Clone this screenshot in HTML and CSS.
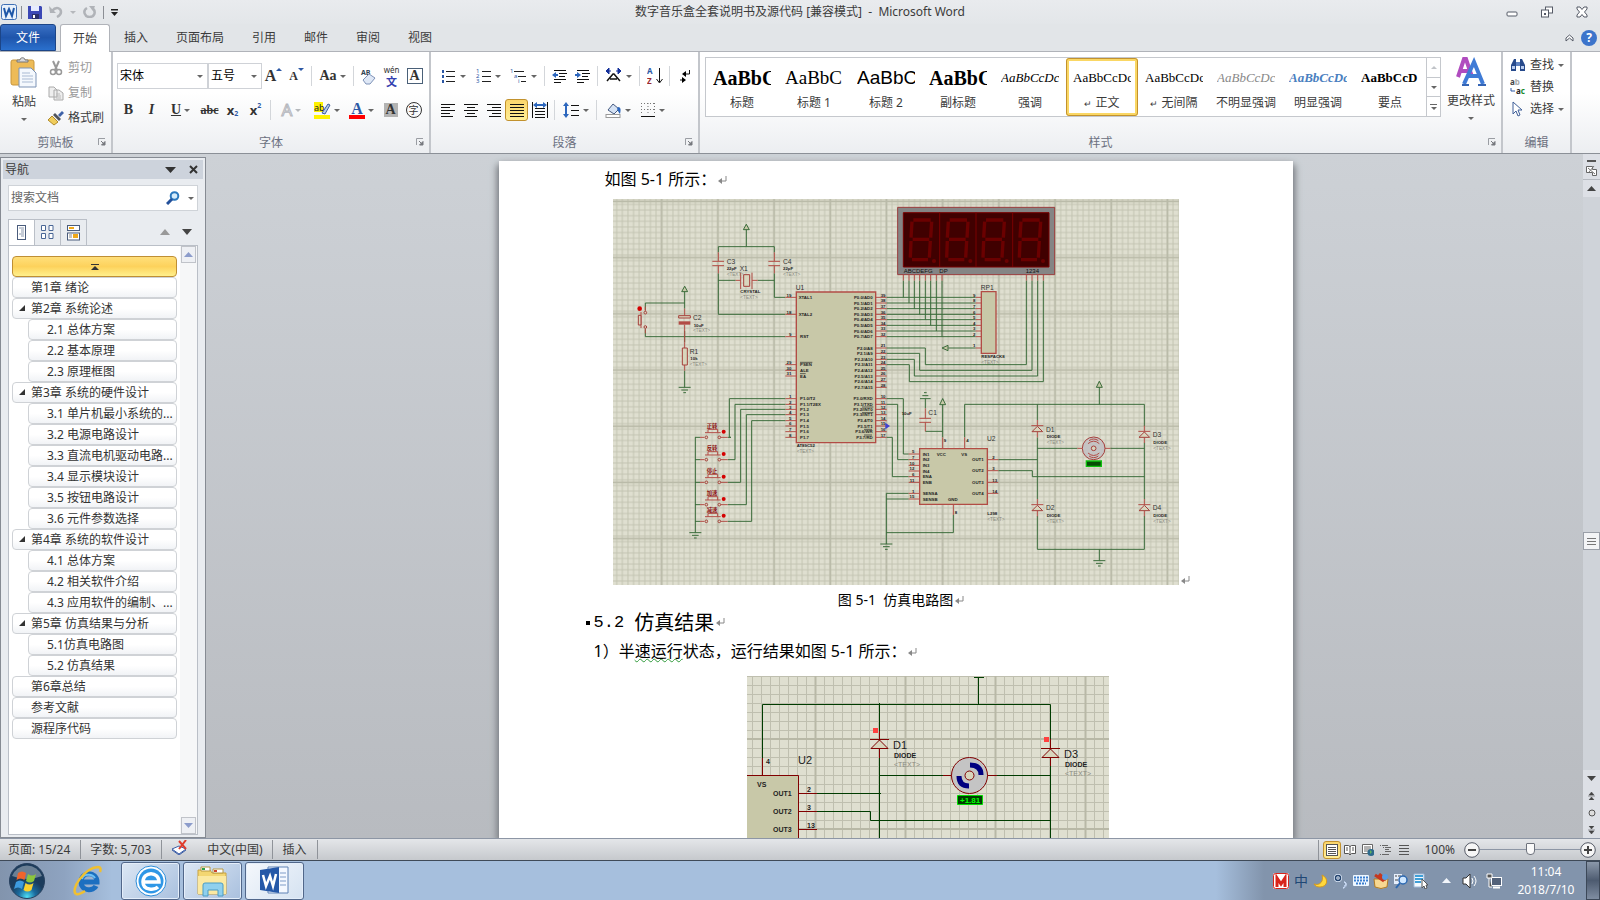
FILE: index.html
```html
<!DOCTYPE html>
<html lang="zh-CN">
<head>
    <meta charset="UTF-8">
    <meta name="viewport" content="width=device-width, initial-scale=1.0">
    <title>数字音乐盒全套说明书及源代码 - Microsoft Word</title>
    <link rel="stylesheet" href="styles.css">
</head>
<body>

    <!-- shared shapes -->
    <svg class="defs" width="0" height="0" aria-hidden="true">
        <defs>
            <symbol id="mark" viewBox="0 0 9 9"><path d="M8 0v5H2" fill="none" stroke="#888"/><path d="M0 5l4-3v6z" fill="#888"/></symbol>
            <symbol id="launcher" viewBox="0 0 8 8"><path d="M.5 7V.5H7" fill="none" stroke="#9a9da3"/><path d="M3 3l3 3M7 3.500V7H3.500z" stroke="#77797e" fill="#77797e"/></symbol>
            <symbol id="diode" viewBox="-20 0 40 20" overflow="visible"><path class="red" d="M0-17V0M0 18V35M-18 0H18"/><path class="part" d="M0 2L-16 18H16z"/></symbol>
            <symbol id="gnd" viewBox="-20 0 40 20" overflow="visible"><path class="wire" d="M-18 0H18M-10 8H10M-4 16H4"/></symbol>
            <symbol id="digit" viewBox="0 0 75 132" overflow="visible"><path d="M12 5H64M8 10L5 58M67 10L64 58M10 63H60M5 68L3 118M63 68L60 118M8 124H56" stroke="#6b0000" stroke-width="10"/><circle cx="74" cy="128" r="6" fill="#6b0000"/></symbol>
            <symbol id="key" viewBox="0 0 90 40" overflow="visible"><path class="wire" d="M-3 0H12M95 0H105"/><path class="red" d="M12 0H25M74 0H95M27-14H74M36-14V-24H65V-14"/><circle class="part" cx="31" cy="0" r="4"/><circle class="part" cx="70" cy="0" r="4"/><circle cx="83" cy="-17" r="6" fill="#d40000"/></symbol>
        </defs>
    </svg>

    <div class="window">

        <header class="titlebar">
            <div class="quick">
                <svg width="16" height="16"><rect x=".5" y=".5" width="15" height="15" rx="2" fill="#e9f1fb" stroke="#3f6fb5"/><path d="M3 4l2 8 3-7 3 7 2-8" fill="none" stroke="#1f57a8" stroke-width="2"/></svg>
                <i class="bar"></i>
                <button title="保存"><svg width="14" height="14"><path d="M0 1h13l1 1v12H0z" fill="#3b47b5"/><path d="M3 1h8v5H3z" fill="#e6ebff"/><path d="M4 9h7v5H4z" fill="#2a2f6b"/><path d="M5 10h2v3H5z" fill="#fff"/></svg></button>
                <button title="撤消"><svg width="14" height="12"><path d="M0 0l1 7h6z" fill="#b0b3b8"/><path d="M3 5c4-5 9-3 9 1 0 3-2 4-4 5" fill="none" stroke="#b0b3b8" stroke-width="2.500"/></svg></button>
                <span class="caret pale"></span>
                <button title="恢复"><svg width="13" height="12"><path d="M4 2C-1 5 2 11 6.500 11c5 0 7-5 3-9" fill="none" stroke="#b0b3b8" stroke-width="2.500"/><path d="M6 0h6l-2 5z" fill="#b0b3b8"/></svg></button>
                <i class="bar"></i>
                <button title="自定义"><svg width="7" height="7"><path d="M0 0h7v1.500H0zM0 3h7L3.500 7z" fill="#222"/></svg></button>
            </div>
            <h1>数字音乐盒全套说明书及源代码 [兼容模式] &nbsp;- &nbsp;Microsoft Word</h1>
            <div class="winbtns">
                <button title="最小化"><svg width="12" height="12"><rect x="1" y="6" width="10" height="4" rx="1" fill="#fff" stroke="#555a66"/></svg></button>
                <button title="还原"><svg width="12" height="12"><rect x="4.500" y="1" width="7" height="6" fill="#fff" stroke="#555a66"/><rect x=".5" y="4" width="7" height="7" fill="#fff" stroke="#555a66"/><path d="M3 7h2v2H3z" fill="#555a66"/></svg></button>
                <button title="关闭"><svg width="12" height="12"><path d="M1 1h3l2 2.500L8 1h3v2L8.500 6 11 9v2H8L6 8.500 4 11H1V9l2.500-3L1 3z" fill="#fff" stroke="#555a66"/></svg></button>
            </div>
        </header>

        <nav class="tabs">
            <button class="file">文件</button>
            <button class="active">开始</button>
            <button>插入</button>
            <button class="wide">页面布局</button>
            <button>引用</button>
            <button>邮件</button>
            <button>审阅</button>
            <button>视图</button>
            <span class="grow"></span>
            <button class="mini" title="功能区最小化"><svg width="9" height="8"><path d="M1 7V4l3.500-3L8 4v3L4.500 4z" fill="#fff" stroke="#555a66"/></svg></button>
            <button class="help" title="帮助">?</button>
        </nav>

        <section class="ribbon">
            <div class="group clipboard">
                <div class="body">
                    <button class="big">
                        <svg width="28" height="31"><rect x="1" y="3" width="23" height="25" rx="2" fill="#edbb58" stroke="#c8963c"/><path d="M7 5V3h3c0-3 5-3 5 0h3v2z" fill="#d9dade" stroke="#777"/><path d="M9 11h12l5 5v14H9z" fill="#f4f8fd" stroke="#7c93b5"/><path d="M12 16h8M12 19h11M12 22h11M12 25h11" stroke="#a9bad3"/></svg>
                        <span>粘贴</span><i class="caret"></i>
                    </button>
                    <div class="stack">
                        <button class="off"><svg width="16" height="16"><path d="M5 1l4 9M11 1L7 10" stroke="#999" stroke-width="2"/><circle cx="5" cy="12" r="2.500" fill="none" stroke="#999" stroke-width="1.500"/><circle cx="11" cy="12" r="2.500" fill="none" stroke="#999" stroke-width="1.500"/></svg>剪切</button>
                        <button class="off"><svg width="16" height="16"><path d="M1 2h5l3 3v7H1zM6 5h5l4 3v7H6z" fill="#eee" stroke="#aaa"/><path d="M8 9h4M8 11h5M8 13h5" stroke="#bbb"/></svg>复制</button>
                        <button><svg width="16" height="16"><path d="M10 5l4-4 2 2-4 4z" fill="#3f62a8"/><path d="M7 3l6 6-2 2-6-6z" fill="#50545c"/><path d="M4 6l6 6-4 3-6-5z" fill="#f0cd5c" stroke="#b08a2a"/></svg>格式刷</button>
                    </div>
                </div>
                <footer>剪贴板<svg width="8" height="8"><use href="#launcher"/></svg></footer>
            </div>

            <div class="group font">
                <div class="body rows">
                    <div class="row">
                        <label class="combo face"><select aria-label="字体"><option>宋体</option></select><i class="caret"></i></label>
                        <label class="combo size"><select aria-label="字号"><option>五号</option></select><i class="caret"></i></label>
                        <button class="tool serif grown">A<sup class="up"></sup></button>
                        <button class="tool serif shrunk">A<sup class="down"></sup></button>
                        <i class="sep"></i>
                        <button class="tool split serif">Aa<i class="caret"></i></button>
                        <i class="sep"></i>
                        <button class="tool" title="清除格式"><svg width="17" height="17"><text x="1" y="7" font-size="7" font-weight="bold" fill="#345">AB</text><path d="M3 12l6-6 6 4-5 6H6z" fill="#dfe8f6" stroke="#7f93b8"/></svg></button>
                        <button class="tool pinyin"><small>wén</small><b>文</b></button>
                        <button class="tool serif boxed"><span>A</span></button>
                    </div>
                    <div class="row">
                        <button class="tool serif">B</button>
                        <button class="tool serif ital">I</button>
                        <button class="tool split serif"><u>U</u><i class="caret"></i></button>
                        <button class="tool serif strike">abc</button>
                        <button class="tool sub">x<sub>2</sub></button>
                        <button class="tool sub">x<sup>2</sup></button>
                        <i class="sep"></i>
                        <button class="tool split outlined">A<i class="caret pale"></i></button>
                        <button class="tool split" title="突出显示"><svg width="17" height="17"><path d="M0 0h9v10H0zM0 13h16v4H0z" fill="#fff200"/><text x="0" y="9" font-size="9" fill="#222">ab</text><path d="M8 11l6-9 2 1-5 9z" fill="#b6cbea" stroke="#3c5ea0"/></svg><i class="caret"></i></button>
                        <button class="tool split serif tint"><span>A</span><i class="caret"></i></button>
                        <button class="tool serif shade"><span>A</span></button>
                        <button class="tool ring"><span>字</span></button>
                    </div>
                </div>
                <footer>字体<svg width="8" height="8"><use href="#launcher"/></svg></footer>
            </div>

            <div class="group para">
                <div class="body rows">
                    <div class="row">
                        <button class="tool split" title="项目符号"><svg width="16" height="16"><path d="M5 3.500h9M5 8.500h9M5 13.500h9" stroke="#222"/><path d="M1 2h2v3H1zM1 7h2v3H1zM1 12h2v3H1z" fill="#2c58a5"/></svg><i class="caret"></i></button>
                        <button class="tool split" title="编号"><svg width="16" height="16"><path d="M6 3.500h9M6 8.500h9M6 13.500h9" stroke="#222"/><text font-size="6" fill="#2c58a5"><tspan x="0" y="5">1</tspan><tspan x="0" y="10">2</tspan><tspan x="0" y="15">3</tspan></text></svg><i class="caret"></i></button>
                        <button class="tool split" title="多级列表"><svg width="18" height="16"><path d="M4 3.500h10M8 8.500h8M11 13.500h5" stroke="#222"/><text font-size="6" fill="#2c58a5"><tspan x="0" y="5">1</tspan><tspan x="4" y="10">a</tspan><tspan x="8" y="15">i</tspan></text></svg><i class="caret"></i></button>
                        <i class="sep"></i>
                        <button class="tool" title="减少缩进"><svg width="17" height="16"><path d="M3 2.500h12M8 5.500h8M8 8.500h6M3 11.500h12M3 14.500h7" stroke="#111"/><path d="M1 7l4-3v2h2v2H5v2z" fill="#2c66bd"/></svg></button>
                        <button class="tool" title="增加缩进"><svg width="17" height="16"><path d="M3 2.500h12M8 5.500h8M8 8.500h6M3 11.500h12M3 14.500h7" stroke="#111"/><path d="M7 7L3 4v2H1v2h2v2z" fill="#2c66bd"/></svg></button>
                        <i class="sep"></i>
                        <button class="tool split" title="中文版式"><svg width="18" height="16"><path d="M2 13l6-7h1l6 7M5 11h7" fill="none" stroke="#111" stroke-width="1.500"/><path d="M1 3l3-3v6zM16 3l-3-3v6zM4 3h2M11 3h2" fill="#14309a" stroke="#14309a"/></svg><i class="caret"></i></button>
                        <i class="sep"></i>
                        <button class="tool" title="排序"><svg width="16" height="18"><text x="0" y="7" font-size="8" font-weight="bold" fill="#2c58a5">A</text><text x="0" y="17" font-size="8" font-weight="bold" fill="#9a2830">Z</text><path d="M12.500 1v14M9.500 12l3 4 3-4" fill="none" stroke="#111"/></svg></button>
                        <i class="sep"></i>
                        <button class="tool" title="显示标记"><svg width="16" height="16"><path d="M12.500 2v4H7M7 12H3" fill="none" stroke="#111"/><path d="M5 6l4-3v6zM9 12l-4-3v6z"/></svg></button>
                    </div>
                    <div class="row">
                        <button class="tool" title="左对齐"><svg width="16" height="14"><path d="M1 1.500h14M1 4.500h9M1 7.500h14M1 10.500h9M1 13.500h12" stroke="#111"/></svg></button>
                        <button class="tool" title="居中"><svg width="16" height="14"><path d="M1 1.500h14M4 4.500h8M1 7.500h14M4 10.500h8M2 13.500h12" stroke="#111"/></svg></button>
                        <button class="tool" title="右对齐"><svg width="16" height="14"><path d="M1 1.500h14M6 4.500h9M1 7.500h14M6 10.500h9M3 13.500h12" stroke="#111"/></svg></button>
                        <button class="tool gold" title="两端对齐"><svg width="16" height="14"><path d="M1 1.500h14M1 4.500h14M1 7.500h14M1 10.500h14M1 13.500h14" stroke="#111"/></svg></button>
                        <button class="tool" title="分散对齐"><svg width="16" height="16"><path d="M3 6.500h10M3 9.500h10M3 12.500h10M3 15.500h10M.5 0v16M15.500 0v16" stroke="#111"/><path d="M1 3l4-3v2h6V0l4 3-4 3V4H5v2z" fill="#2c66bd"/></svg></button>
                        <i class="sep"></i>
                        <button class="tool split" title="行距"><svg width="17" height="16"><path d="M8 3.500h8M8 8.500h8M8 13.500h8" stroke="#111"/><path d="M3 0l3 4H4v8h2l-3 4-3-4h2V4H0z" fill="#2c66bd"/></svg><i class="caret"></i></button>
                        <i class="sep"></i>
                        <button class="tool split" title="底纹"><svg width="17" height="16"><path d="M3 8l5-6 6 5-5 5z" fill="#d5e2f4" stroke="#455a80"/><path d="M13 5c3 0 3 3 2 7-2-2-2-4-3-5z" fill="#2c66bd"/><rect x="1" y="12.500" width="14" height="3" fill="#fff" stroke="#999"/></svg><i class="caret"></i></button>
                        <button class="tool split" title="边框"><svg width="16" height="16"><path d="M1.500 1v12M14.500 1v12M8 1v12M1 1.500h14M1 7.500h14" stroke="#777" stroke-dasharray="1 2"/><path d="M1 14.500h14" stroke="#111"/></svg><i class="caret"></i></button>
                    </div>
                </div>
                <footer>段落<svg width="8" height="8"><use href="#launcher"/></svg></footer>
            </div>

            <div class="group styles">
                <div class="body">
                    <div class="gallery">
                        <button><b class="s1">AaBbC</b><span>标题</span></button>
                        <button><b class="s2">AaBbC</b><span>标题 1</span></button>
                        <button><b class="s3">AaBbC</b><span>标题 2</span></button>
                        <button><b class="s1">AaBbC</b><span>副标题</span></button>
                        <button><b class="s4">AaBbCcDc</b><span>强调</span></button>
                        <button class="picked"><b class="s5">AaBbCcDc</b><span><small>↵</small> 正文</span></button>
                        <button><b class="s5">AaBbCcDc</b><span><small>↵</small> 无间隔</span></button>
                        <button><b class="s4 gray">AaBbCcDc</b><span>不明显强调</span></button>
                        <button><b class="s4 blue">AaBbCcDc</b><span>明显强调</span></button>
                        <button><b class="s6">AaBbCcD</b><span>要点</span></button>
                        <div class="updown">
                            <button title="上一行"><i class="tri"></i></button>
                            <button title="下一行"><i class="caret"></i></button>
                            <button title="其他"><i class="line"></i><i class="caret"></i></button>
                        </div>
                    </div>
                    <button class="big change">
                        <svg width="30" height="30"><path d="M2 20L8 2h2l6 18M5 14h8" fill="none" stroke="#b04cbf" stroke-width="4"/><path d="M8 27L18 5l9 22M12 19h11" fill="none" stroke="#3f7bd6" stroke-width="4"/><path d="M6 28h7M22 28h8" stroke="#3565b5" stroke-width="2"/></svg>
                        <span>更改样式</span><i class="caret"></i>
                    </button>
                </div>
                <footer>样式<svg width="8" height="8"><use href="#launcher"/></svg></footer>
            </div>

            <div class="group edit">
                <div class="body">
                    <div class="stack">
                        <button><svg width="16" height="16"><path d="M1 14V8l3-6h2v12zM15 14V8l-3-6h-2v12z" fill="#274a8c"/><path d="M6 5h4v4H6z" fill="#5f82c0"/><path d="M2 9h3v3H2zM11 9h3v3h-3z" fill="#b9cdf0"/></svg>查找<i class="caret"></i></button>
                        <button><svg width="16" height="16"><text x="0" y="6" font-size="8" font-weight="bold" fill="#444">a<tspan fill="#aaa">b</tspan></text><text x="6" y="15" font-size="8" font-weight="bold" fill="#222">a<tspan fill="#178a2c">c</tspan></text><path d="M1 9v3h4" fill="none" stroke="#2c58a5"/></svg>替换</button>
                        <button><svg width="16" height="16"><path d="M3 1v12l3-3 2 5 2-1-2-5h4z" fill="#fff" stroke="#3f5f98"/></svg>选择<i class="caret"></i></button>
                    </div>
                </div>
                <footer>编辑</footer>
            </div>
        </section>

        <main class="work">
            <aside class="navpane">
                <div class="navhead"><span>导航</span><button title="选项"><svg width="11" height="6"><path d="M0 0h11L5.500 6z" fill="#333"/></svg></button><button title="关闭"><svg width="9" height="9"><path d="M1 1l7 7M8 1L1 8" stroke="#333" stroke-width="2"/></svg></button></div>
                <div class="search">
                    <input type="text" placeholder="搜索文档" aria-label="搜索文档">
                    <svg width="14" height="14"><circle cx="8.500" cy="5" r="3.800" fill="#d5ecfb" stroke="#2a78bd" stroke-width="2"/><path d="M6 8l-5 5" stroke="#24509a" stroke-width="3"/></svg>
                    <i class="caret"></i>
                </div>
                <div class="navtabs">
                    <button class="on" title="标题"><svg width="10" height="16"><rect x=".5" y=".5" width="8" height="14" fill="#fff" stroke="#4a5c7c"/><path d="M2 3h5M4 5h3M4 7h3M2 9h5M4 11h3" stroke="#8b98ad"/></svg></button>
                    <button title="页面"><svg width="13" height="15"><path d="M.5.5h4v5h-4zM8 .5h4v5H8zM.5 8.500h4v5h-4zM8 8.500h4v5H8z" fill="#fff" stroke="#4a6796"/></svg></button>
                    <button title="结果"><svg width="14" height="16"><rect x=".5" y=".5" width="12" height="5" fill="#fff" stroke="#4a5c7c"/><rect x=".5" y="8" width="12" height="7" fill="#fff" stroke="#4a5c7c"/><path d="M2 2h5v2H2zM6 9h5v4H6z" fill="#f0a818"/><path d="M2 10h3M2 12h3" stroke="#888"/></svg></button>
                    <span class="grow"></span>
                    <svg width="10" height="6"><path d="M0 6h10L5 0z" fill="#999"/></svg>
                    <svg width="10" height="6"><path d="M0 0h10L5 6z" fill="#444"/></svg>
                </div>
                <div class="outline">
                    <ul>
                        <li><button class="totop" title="跳转到开头"><svg width="8" height="7"><path d="M0 .5h8" stroke="#333"/><path d="M0 6h8L4 2z" fill="#333"/></svg></button></li>
                        <li><a href="#">第1章 绪论</a></li>
                        <li class="open"><a href="#">第2章 系统论述</a></li>
                        <li class="sub2"><a href="#">2.1 总体方案</a></li>
                        <li class="sub2"><a href="#">2.2 基本原理</a></li>
                        <li class="sub2"><a href="#">2.3 原理框图</a></li>
                        <li class="open"><a href="#">第3章 系统的硬件设计</a></li>
                        <li class="sub2"><a href="#">3.1 单片机最小系统的...</a></li>
                        <li class="sub2"><a href="#">3.2 电源电路设计</a></li>
                        <li class="sub2"><a href="#">3.3 直流电机驱动电路...</a></li>
                        <li class="sub2"><a href="#">3.4 显示模块设计</a></li>
                        <li class="sub2"><a href="#">3.5 按钮电路设计</a></li>
                        <li class="sub2"><a href="#">3.6 元件参数选择</a></li>
                        <li class="open"><a href="#">第4章 系统的软件设计</a></li>
                        <li class="sub2"><a href="#">4.1 总体方案</a></li>
                        <li class="sub2"><a href="#">4.2 相关软件介绍</a></li>
                        <li class="sub2"><a href="#">4.3 应用软件的编制、...</a></li>
                        <li class="open"><a href="#">第5章 仿真结果与分析</a></li>
                        <li class="sub2"><a href="#">5.1仿真电路图</a></li>
                        <li class="sub2"><a href="#">5.2 仿真结果</a></li>
                        <li><a href="#">第6章总结</a></li>
                        <li><a href="#">参考文献</a></li>
                        <li><a href="#">源程序代码</a></li>
                    </ul>
                    <div class="navscroll">
                        <button title="向上"><svg width="9" height="5"><path d="M0 5h9L4.500 0z" fill="#8c9ccb"/></svg></button>
                        <button title="向下"><svg width="9" height="5"><path d="M0 0h9L4.500 5z" fill="#8c9ccb"/></svg></button>
                    </div>
                </div>
            </aside>

            <div class="canvas">
                <article class="page">
                    <p class="lead">如图 5-1 所示：<svg class="mark" width="9" height="9"><use href="#mark"/></svg></p>

                    <figure>
                        <svg class="circuit" width="566" height="386" viewBox="39 27 1698 1158">
                            <defs>
                                <pattern id="fine" x="8" y="18" width="16.860" height="16.860" patternUnits="userSpaceOnUse"><path d="M0 8.400H17M8.400 0V17" stroke="#c3c4b2" stroke-width="3"/></pattern>
                                <pattern id="coarse" x="101" y="119" width="168.600" height="168.600" patternUnits="userSpaceOnUse"><path d="M0 84H169M84 0V169" stroke="#b9baa8" stroke-width="5"/></pattern>
                            </defs>
                            <rect x="39" y="27" width="1698" height="1158" fill="#dfdfd0"/>
                            <rect x="39" y="27" width="1698" height="1158" fill="url(#fine)"/>
                            <rect x="39" y="27" width="1698" height="1158" fill="url(#coarse)"/>

                            <!-- crystal and reset -->
                            <path class="wire" d="M439 103V170M355 187V170H523V187M355 250V373H556M523 250V322H556M355 271H407M473 271H523M136 360V339H254M254 289V356M254 423V457M254 542V592M136 418V440H556"/>
                            <g class="arrow"><path d="M439 103l-9 16h18zM254 289l-9 16h18z"/></g>
                            <path class="red" d="M355 187V213M337 214H372M337 227H372M355 227V250M523 187V213M505 214H540M505 227H540M523 227V250M407 271H422M422 248V297M456 248V297M456 271H473M254 356V377M254 404V457M254 457V474M254 525V542M136 350V364M136 415V430M123 366V414"/>
                            <path class="part" d="M431 254H449V289H431zM236 377H271V384H236zM247 474H262V525H247zM115 376H123V405H115z"/>
                            <path d="M236 394H271V404H236z" fill="#b24c45"/>
                            <circle class="part" cx="136" cy="368" r="4"/><circle class="part" cx="136" cy="411" r="4"/><circle cx="119" cy="356" r="7" fill="#d40000"/>
                            <use href="#gnd" x="234" y="592" width="40" height="20"/>

                            <!-- display -->
                            <path d="M893 52H1364V254H893z" fill="#858585" stroke="#9c3c3c" stroke-width="3"/>
                            <path d="M910 68H1347V231H910zM1019 68V231M1128 68V231M1238 68V231" fill="#400000" stroke="#7a0000" stroke-width="3"/>
                            <use href="#digit" x="928" y="85" width="75" height="132"/><use href="#digit" x="1037" y="85" width="75" height="132"/><use href="#digit" x="1146" y="85" width="75" height="132"/><use href="#digit" x="1255" y="85" width="75" height="132"/>
                            <path class="red" d="M910 254V272M927 254V272M943 254V272M959 254V272M976 254V272M992 254V272M1009 254V272M1026 254V272M1279 254V272M1296 254V272M1313 254V272M1330 254V272"/>
                            <path class="wire" d="M910 272V322M927 272V339M943 272V356M959 272V373M976 272V389M992 272V406M1009 272V423M1026 272V440M860 322H1127M860 339H1127M860 356H1127M860 373H1127M860 389H1127M860 406H1127M860 423H1127M860 440H1127M1045 474H1127"/>
                            <path class="wire" d="M860 474H976V524H1279V272M860 490H959V541H1296V272M860 508H943V558H1313V272M860 524H928V575H1330V272"/>
                            <path class="arrow" d="M1026 474l18-8v16z"/>
                            <path class="red" d="M1127 322H1144M1127 339H1144M1127 356H1144M1127 373H1144M1127 389H1144M1127 406H1144M1127 423H1144M1127 440H1144M1127 474H1144"/>
                            <path class="chip" d="M1144 305H1188V490H1144z"/>

                            <!-- mcu -->
                            <path class="chip" d="M589 306H827V758H589z"/>
                            <path class="red" d="M556 322H589M556 373H589M556 440H589M556 524H589M556 541H589M556 558H589M556 626H589M556 643H589M556 658H589M556 674H589M556 692H589M556 708H589M556 725H589M556 742H589"/>
                            <path class="red" d="M827 322H860M827 339H860M827 356H860M827 373H860M827 389H860M827 406H860M827 423H860M827 440H860M827 474H860M827 490H860M827 508H860M827 524H860M827 541H860M827 558H860M827 575H860M827 592H860M827 626H860M827 643H860M827 658H860M827 674H860M827 692H860M827 708H860M827 725H860M827 742H860"/>
                            <path d="M600 517H637M600 551H617M786 651H820M786 668H820M792 718H816M792 735H816" stroke="#222" stroke-width="2"/>
                            <path d="M856 698l14 10-14 10z" fill="#4040d0"/>

                            <!-- keys -->
                            <path class="wire" d="M286 742V1028M393 742H388V626H556M393 809H405V643H556M393 877H422V658H556M393 944H439V674H556M393 994H455V692H556"/>
                            <use href="#key" x="288" y="742" width="90" height="40"/><use href="#key" x="288" y="809" width="90" height="40"/><use href="#key" x="288" y="877" width="90" height="40"/><use href="#key" x="288" y="944" width="90" height="40"/><use href="#key" x="288" y="994" width="90" height="40"/>
                            <use href="#gnd" x="266" y="1028" width="40" height="20"/>

                            <!-- driver and bridge -->
                            <path class="wire" d="M860 626H910V792H926M860 643H893V809H926M860 742H877V860H926M926 910H859V1062M926 927H859M1060 975V1028H859M960 626H992M967 617H985M972 608H980M976 626V655M976 724H1028M1028 626V742M1094 742V643H1633M1498 574V643M1195 809H1312M1195 842H1297V860H1633M1312 643V690M1312 742V927M1312 978V1078H1633V978M1633 643V708M1633 758V927M1312 775H1432M1531 775H1633M1498 1078V1112"/>
                            <g class="arrow"><path d="M1028 626l-9 18h18zM1498 574l-9 18h18z"/></g>
                            <path class="red" d="M976 655V685M958 685H993M958 697H993M976 697V724M1028 742V776M1094 742V776M1060 943V975M926 792H959M926 809H959M926 826H959M926 843H959M926 860H959M926 877H959M926 910H959M926 927H959M1162 809H1195M1162 842H1195M1162 877H1195M1162 910H1195M1432 775H1447M1515 775H1531"/>
                            <path class="chip" d="M959 776H1162V943H959z"/>
                            <use href="#diode" x="1292" y="707" width="40" height="20"/><use href="#diode" x="1292" y="944" width="40" height="20"/><use href="#diode" x="1613" y="724" width="40" height="20"/><use href="#diode" x="1613" y="944" width="40" height="20"/>
                            <use href="#gnd" x="839" y="1062" width="40" height="20"/><use href="#gnd" x="1478" y="1112" width="40" height="20"/>
                            <circle cx="1481" cy="775" r="34" fill="#c5c3c3" stroke="#a5403c" stroke-width="3"/><circle class="part" cx="1481" cy="775" r="7"/>
                            <path class="red" d="M1464 761q17-15 34 0M1467 752q14-10 28 0M1464 789q17 15 34 0M1467 798q14 10 28 0"/>
                            <path d="M1459 813H1504V829H1459z" fill="#064c06" stroke="#0fc00f" stroke-width="4"/>

                            <g class="name">
                                <text x="380" y="221">C3</text><text x="549" y="221">C4</text><text x="419" y="242">X1</text><text x="279" y="390">C2</text><text x="269" y="491">R1</text><text x="587" y="300">U1</text><text x="1142" y="300">RP1</text><text x="985" y="676">C1</text><text x="1161" y="753">U2</text><text x="1338" y="725">D1</text><text x="1338" y="961">D2</text><text x="1658" y="742">D3</text><text x="1658" y="961">D4</text>
                            </g>
                            <g class="seg"><text x="911" y="248">ABCDEFG</text><text x="1018" y="248">DP</text><text x="1277" y="248">1234</text></g>
                            <g class="tiny">
                                <text x="380" y="241">22pF</text><text x="549" y="241">22pF</text><text x="421" y="310">CRYSTAL</text><text x="281" y="410">10uF</text><text x="271" y="511">10k</text><text x="590" y="772">AT89C52</text><text x="1144" y="504">RESPACK8</text><text x="905" y="676">10uF</text><text x="1162" y="975">L298</text><text x="1340" y="745">DIODE</text><text x="1340" y="981">DIODE</text><text x="1660" y="762">DIODE</text><text x="1660" y="981">DIODE</text>
                                <text><tspan x="596" y="327">XTAL1</tspan><tspan x="596" y="378">XTAL2</tspan><tspan x="600" y="445">RST</tspan><tspan x="600" y="529">PSEN</tspan><tspan x="600" y="546">ALE</tspan><tspan x="600" y="563">EA</tspan><tspan x="600" y="631">P1.0/T2</tspan><tspan x="600" y="648">P1.1/T2EX</tspan><tspan x="600" y="663">P1.2</tspan><tspan x="600" y="679">P1.3</tspan><tspan x="600" y="697">P1.4</tspan><tspan x="600" y="713">P1.5</tspan><tspan x="600" y="730">P1.6</tspan><tspan x="600" y="747">P1.7</tspan></text>
                                <text text-anchor="end"><tspan x="818" y="327">P0.0/AD0</tspan><tspan x="818" y="344">P0.1/AD1</tspan><tspan x="818" y="361">P0.2/AD2</tspan><tspan x="818" y="378">P0.3/AD3</tspan><tspan x="818" y="394">P0.4/AD4</tspan><tspan x="818" y="411">P0.5/AD5</tspan><tspan x="818" y="428">P0.6/AD6</tspan><tspan x="818" y="445">P0.7/AD7</tspan><tspan x="818" y="479">P2.0/A8</tspan><tspan x="818" y="495">P2.1/A9</tspan><tspan x="818" y="513">P2.2/A10</tspan><tspan x="818" y="529">P2.3/A11</tspan><tspan x="818" y="546">P2.4/A12</tspan><tspan x="818" y="563">P2.5/A13</tspan><tspan x="818" y="580">P2.6/A14</tspan><tspan x="818" y="597">P2.7/A15</tspan><tspan x="818" y="631">P3.0/RXD</tspan><tspan x="818" y="648">P3.1/TXD</tspan><tspan x="818" y="663">P3.2/INT0</tspan><tspan x="818" y="679">P3.3/INT1</tspan><tspan x="818" y="697">P3.4/T0</tspan><tspan x="818" y="713">P3.5/T1</tspan><tspan x="818" y="730">P3.6/WR</tspan><tspan x="818" y="747">P3.7/RD</tspan></text>
                                <text text-anchor="end"><tspan x="574" y="320">19</tspan><tspan x="574" y="371">18</tspan><tspan x="574" y="438">9</tspan><tspan x="574" y="522">29</tspan><tspan x="574" y="539">30</tspan><tspan x="574" y="556">31</tspan><tspan x="574" y="624">1</tspan><tspan x="574" y="641">2</tspan><tspan x="574" y="656">3</tspan><tspan x="574" y="672">4</tspan><tspan x="574" y="690">5</tspan><tspan x="574" y="706">6</tspan><tspan x="574" y="723">7</tspan><tspan x="574" y="740">8</tspan></text>
                                <text><tspan x="842" y="320">39</tspan><tspan x="842" y="337">38</tspan><tspan x="842" y="354">37</tspan><tspan x="842" y="371">36</tspan><tspan x="842" y="387">35</tspan><tspan x="842" y="404">34</tspan><tspan x="842" y="421">33</tspan><tspan x="842" y="438">32</tspan><tspan x="842" y="472">21</tspan><tspan x="842" y="488">22</tspan><tspan x="842" y="506">23</tspan><tspan x="842" y="522">24</tspan><tspan x="842" y="539">25</tspan><tspan x="842" y="556">26</tspan><tspan x="842" y="573">27</tspan><tspan x="842" y="590">28</tspan><tspan x="842" y="624">10</tspan><tspan x="842" y="641">11</tspan><tspan x="842" y="656">12</tspan><tspan x="842" y="672">13</tspan><tspan x="842" y="690">14</tspan><tspan x="842" y="706">15</tspan><tspan x="842" y="723">16</tspan><tspan x="842" y="740">17</tspan></text>
                                <text><tspan x="1119" y="320">9</tspan><tspan x="1119" y="337">8</tspan><tspan x="1119" y="354">7</tspan><tspan x="1119" y="371">6</tspan><tspan x="1119" y="387">5</tspan><tspan x="1119" y="404">4</tspan><tspan x="1119" y="421">3</tspan><tspan x="1119" y="438">2</tspan><tspan x="1119" y="472">1</tspan></text>
                                <text text-anchor="end"><tspan x="943" y="790">5</tspan><tspan x="943" y="807">7</tspan><tspan x="943" y="824">10</tspan><tspan x="943" y="841">12</tspan><tspan x="943" y="858">6</tspan><tspan x="943" y="875">11</tspan><tspan x="943" y="908">1</tspan><tspan x="943" y="925">15</tspan></text>
                                <text><tspan x="968" y="797">IN1</tspan><tspan x="968" y="814">IN2</tspan><tspan x="968" y="831">IN3</tspan><tspan x="968" y="848">IN4</tspan><tspan x="968" y="865">ENA</tspan><tspan x="968" y="882">ENB</tspan><tspan x="968" y="915">SENSA</tspan><tspan x="968" y="932">SENSB</tspan><tspan x="1010" y="797">VCC</tspan><tspan x="1084" y="797">VS</tspan><tspan x="1044" y="934">GND</tspan><tspan x="1031" y="756">9</tspan><tspan x="1099" y="756">4</tspan><tspan x="1064" y="973">8</tspan><tspan x="1177" y="807">2</tspan><tspan x="1177" y="840">3</tspan><tspan x="1177" y="875">13</tspan><tspan x="1177" y="908">14</tspan></text>
                                <text text-anchor="end"><tspan x="1151" y="814">OUT1</tspan><tspan x="1151" y="847">OUT2</tspan><tspan x="1151" y="882">OUT3</tspan><tspan x="1151" y="915">OUT4</tspan></text>
                            </g>
                            <g class="keyname"><text x="320" y="714">正转</text><text x="320" y="781">反转</text><text x="320" y="849">停止</text><text x="320" y="916">加速</text><text x="320" y="967">减速</text></g>
                            <g class="ghost">
                                <text x="380" y="258">&lt;TEXT&gt;</text><text x="549" y="258">&lt;TEXT&gt;</text><text x="421" y="327">&lt;TEXT&gt;</text><text x="279" y="426">&lt;TEXT&gt;</text><text x="269" y="527">&lt;TEXT&gt;</text><text x="590" y="789">&lt;TEXT&gt;</text><text x="1144" y="521">&lt;TEXT&gt;</text><text x="1162" y="992">&lt;TEXT&gt;</text><text x="1340" y="762">&lt;TEXT&gt;</text><text x="1340" y="998">&lt;TEXT&gt;</text><text x="1660" y="779">&lt;TEXT&gt;</text><text x="1660" y="998">&lt;TEXT&gt;</text>
                            </g>
                        </svg><svg class="mark" width="9" height="9"><use href="#mark"/></svg>
                        <figcaption>图 5-1&nbsp; 仿真电路图<svg class="mark" width="9" height="9"><use href="#mark"/></svg></figcaption>
                    </figure>

                    <h2><span class="half">5.2 </span>仿真结果<svg class="mark" width="9" height="9"><use href="#mark"/></svg></h2>
                    <p class="state">1）半<span class="wavy">速运行</span>状态，运行结果如图 5-1 所示：<svg class="mark" width="9" height="9"><use href="#mark"/></svg></p>

                    <figure class="second">
                        <svg class="circuit large" width="362" height="200" viewBox="0 0 362 200">
                            <defs>
                                <pattern id="fine2" x="5" y="0" width="9" height="9" patternUnits="userSpaceOnUse"><path d="M0 .5H9M.5 0V9" stroke="#bfbfaf"/></pattern>
                                <pattern id="coarse2" x="23" y="18" width="90" height="90" patternUnits="userSpaceOnUse"><path d="M0 45H90M45.500 0V90" stroke="#b8b8a6" stroke-width="2"/></pattern>
                            </defs>
                            <rect width="362" height="200" fill="#dfdfd0"/><rect width="362" height="200" fill="url(#fine2)"/><rect width="362" height="200" fill="url(#coarse2)"/>
                            <path class="wire" d="M15.500 82V28.500H303.500V63M227 1.500H237M231.500 1V29M132.500 27V55M132.500 82V200M70 117.500H134M70 135.500H123.500V144.500H304M303.500 90V200M132 99.500H196M250 99.500H304"/>
                            <path class="chip" d="M-2 99.500H51.500V210H-2z"/>
                            <path class="red" d="M15.500 82V99M52 117.500H70M52 135.500H70M52 153.500H70M132.500 55V82M123 63.500H142M303.500 63V90M294 72.500H313M196 99.500H205M240 99.500H250"/>
                            <path class="part" d="M132.500 64L124 72.500H141zM303.500 73L295 81.500H312z"/>
                            <path d="M126 52h5v5h-5zM297 61h5v5h-5z" fill="#ff4040"/>
                            <circle cx="222.500" cy="99.500" r="18" fill="#c4c4c4" stroke="#800000"/><circle class="part" cx="222.500" cy="99.500" r="4.500"/>
                            <path d="M223 89q11 0 11 10M222 110q-10 0-10-10" fill="none" stroke="#000080" stroke-width="5"/>
                            <path d="M210.500 119.500H235.500V128.500H210.500z" fill="#003c00" stroke="#00e000"/>
                            <g class="name"><text x="51" y="88">U2</text><text x="146" y="73">D1</text><text x="317" y="82">D3</text></g>
                            <g class="tiny"><text x="147" y="82">DIODE</text><text x="318" y="91">DIODE</text><text x="10" y="111">VS</text><text x="26" y="120">OUT1</text><text x="26" y="138">OUT2</text><text x="26" y="156">OUT3</text><text x="19" y="88">4</text><text x="60" y="116">2</text><text x="60" y="134">3</text><text x="60" y="152">13</text></g>
                            <g class="ghost"><text x="147" y="91">&lt;TEXT&gt;</text><text x="318" y="100">&lt;TEXT&gt;</text></g>
                            <text class="volt" x="213" y="127">+1.81</text>
                        </svg>
                    </figure>
                </article>
            </div>

            <div class="scroll">
                <button class="ruler" title="标尺"><svg width="13" height="16"><path d="M2 1h9" stroke="#555" stroke-width="2"/><path d="M1.500 6.500h6v3h4v6h-4v-3h-6z" fill="#fff" stroke="#666"/><path d="M3 8l7 6M9 6l-5 6" stroke="#777"/></svg></button>
                <button title="向上"><svg width="9" height="5"><path d="M0 5h9L4.500 0z" fill="#444"/></svg></button>
                <div class="track"><button class="thumb" title="滚动"><svg width="9" height="9"><path d="M0 1.500h9M0 4.500h9M0 7.500h9" stroke="#777"/></svg></button></div>
                <button title="向下"><svg width="9" height="5"><path d="M0 0h9L4.500 5z" fill="#444"/></svg></button>
                <button title="前一页"><svg width="7" height="8"><path d="M1 3h5L3.500 0zM0 4h7M1 8h5L3.500 5z" fill="#444" stroke="#444" stroke-width=".5"/></svg></button>
                <button title="选择对象"><svg width="8" height="8"><circle cx="4" cy="4" r="3" fill="#ddd" stroke="#555"/></svg></button>
                <button title="下一页"><svg width="7" height="8"><path d="M1 0h5L3.500 3zM0 4h7M1 5h5L3.500 8z" fill="#444" stroke="#444" stroke-width=".5"/></svg></button>
            </div>
        </main>

        <footer class="status">
            <button>页面: 15/24</button>
            <button>字数: 5,703</button>
            <button class="plain" title="校对"><svg width="17" height="15"><path d="M1 9l7-3 7 3-7 5z" fill="#fff" stroke="#3c5fa8"/><path d="M1 10l7 5 7-5" fill="none" stroke="#3c5fa8"/><path d="M8 1l7 8M15 0L8 9" stroke="#e03c2c" stroke-width="2"/></svg></button>
            <button>中文(中国)</button>
            <button>插入</button>
            <span class="grow"></span>
            <div class="views">
                <button class="gold" title="页面视图"><svg width="12" height="12"><rect x=".5" y=".5" width="11" height="11" fill="#fff" stroke="#555"/><path d="M2 3.500h8M2 5.500h8M2 7.500h8M2 9.500h8" stroke="#555"/></svg></button>
                <button title="阅读版式"><svg width="12" height="12"><path d="M.5 1.500h4l1.500 1 1.500-1h4v8h-4L6 11 4.500 9.500h-4zM6 2v9M2 4h2M2 6h2M8 4h2M8 6h2" fill="#fff" stroke="#555"/></svg></button>
                <button title="Web版式"><svg width="12" height="12"><path d="M.5.5h10v9H.5zM2 3h7M2 5h7M2 7h5" fill="#fff" stroke="#666"/><circle cx="9" cy="8.500" r="3.500" fill="#2d6a8c"/><path d="M8 6l2 2-2 2z" fill="#62b35c"/></svg></button>
                <button title="大纲视图"><svg width="12" height="12"><path d="M2 1.500h6M5 3.500h6M5 5.500h4M5 7.500h6M2 10.500h7M0 1.500h1M3 3.500h1M0 10.500h1" stroke="#666"/></svg></button>
                <button title="草稿"><svg width="12" height="12"><path d="M1 1.500h10M1 4.500h10M1 7.500h10M1 10.500h10" stroke="#555"/></svg></button>
            </div>
            <button class="plain zoom">100%</button>
            <button class="round" title="缩小"><svg width="16" height="16"><circle cx="8" cy="8" r="7.300" fill="#f6f6f6" stroke="#555a66"/><path d="M4 8h8" stroke="#444" stroke-width="2"/></svg></button>
            <input class="slider" type="range" min="0" max="100" value="50" aria-label="显示比例">
            <button class="round" title="放大"><svg width="16" height="16"><circle cx="8" cy="8" r="7.300" fill="#f6f6f6" stroke="#555a66"/><path d="M4 8h8M8 4v8" stroke="#444" stroke-width="2"/></svg></button>
        </footer>

        <div class="taskbar">
            <button class="start" title="开始">
                <svg width="38" height="38"><defs><radialGradient id="orb" cy=".95"><stop offset="0" stop-color="#4fe0f5"/><stop offset=".5" stop-color="#1a6b9e"/><stop offset="1" stop-color="#1c3c5c"/></radialGradient></defs><circle cx="19" cy="19" r="17.500" fill="url(#orb)" stroke="#27405e"/><path d="M4 14a16 16 0 0 1 30 0q-15 6-30 0z" fill="#fff" opacity=".35"/><path d="M10 11q4-3 8 0l-1.500 7q-4-3-8 0z" fill="#f0642c"/><path d="M20 12q4 3 8 0l-2 7q-4 3-8 0z" fill="#8cc63c"/><path d="M8 20q4-3 8 0l-2 7q-4-3-8 0z" fill="#3d9be0"/><path d="M17.500 21q4 3 8 0l-2 7q-4 3-8 0z" fill="#fcd12e"/></svg>
            </button>
            <button class="task bare" title="Internet Explorer"><svg width="32" height="32"><path d="M11 17h15c0-11-16-11-16 0 0 10 13 9 15 4" fill="none" stroke="#1c6fc0" stroke-width="5"/><path d="M11 14c1-5 10-6 13-1" fill="none" stroke="#6cc0f5" stroke-width="2"/><path d="M5 29C-1 25 13 3 27 2c3 0 3 2 2 5M5 29c3 1 6-1 9-3" fill="none" stroke="#f0c030" stroke-width="2.500"/></svg></button>
            <button class="task" title="浏览器"><svg width="32" height="32"><circle cx="16" cy="16" r="15" fill="#fff" stroke="#2b8cd8"/><circle cx="16" cy="16" r="12.500" fill="#2f97e6"/><path d="M8 17h16c0-11-16-11-16 0 0 9 12 8 15 5" fill="none" stroke="#fff" stroke-width="3.500"/></svg></button>
            <button class="task" title="资源管理器"><svg width="34" height="32"><path d="M2 5h12l2 3h14v21H2z" fill="#f3d672" stroke="#c9a23e"/><path d="M5 2h9v4H5zM17 4h10v4H17z" fill="#fff" stroke="#b99a44"/><path d="M6 3h3v2H6z" fill="#2fa04a"/><path d="M18 5h3v2h-3z" fill="#d0442e"/><path d="M2 11h28v18H2z" fill="#fbe9a2"/><path d="M7 31V20q0-2 2-2h16q2 0 2 2v11h-5v-6H12v6z" fill="#8fd0ee" stroke="#4a9cc5"/></svg></button>
            <button class="task current" title="Word"><svg width="34" height="32"><path d="M10 2h20v26H10z" fill="#f4f8ff" stroke="#5f82b5"/><path d="M22 8h6M22 12h6M22 16h6M22 20h6" stroke="#7f9cc8"/><path d="M2 5l19-3v26L2 25z" fill="#2558a8"/><path d="M5 10l3 11 4-10 3 10 3-12" fill="none" stroke="#fff" stroke-width="2.500"/></svg></button>
            <span class="grow"></span>
            <div class="tray">
                <button title="输入法"><svg width="16" height="16"><rect width="16" height="16" rx="2" fill="#fff"/><rect x=".5" y=".5" width="15" height="15" rx="2" fill="none" stroke="#d8251c"/><path d="M4 14V5l4 6 4-6v9" fill="none" stroke="#d8251c" stroke-width="3"/></svg></button>
                <button class="zh">中</button>
                <button title="半角"><svg width="16" height="16"><path d="M9 2c7 3 6 12-2 12-3 0-5-1-6-3 6 2 10-3 8-9z" fill="#ffd83c" stroke="#d59a1e"/></svg></button>
                <button title="标点"><svg width="16" height="16"><circle cx="5" cy="5" r="2.500" fill="none" stroke="#e6f0ff" stroke-width="3"/><circle cx="5" cy="5" r="2.500" fill="none" stroke="#24446e" stroke-width="1.500"/><path d="M11 9a2 2 0 1 1 0 4c1 0 0 2-1 2 4 0 4-6 1-6z" fill="#24446e" stroke="#d5e5ff"/></svg></button>
                <button title="软键盘"><svg width="16" height="12"><rect width="16" height="11" rx="1" fill="#eef7ff"/><path d="M1 2.500h14M1 5.500h14M3 8.500h10" stroke="#3a7ed0" stroke-width="2" stroke-dasharray="2 1"/></svg></button>
                <button title="工具"><svg width="16" height="16"><path d="M1 6h14l-1 8q-6 3-12 0z" fill="#f8d891" stroke="#b07b25"/><path d="M2 2l9 6M6 1l7 6" stroke="#c5371f" stroke-width="3"/><circle cx="12" cy="4" r="3" fill="#5b9ce0"/></svg></button>
                <button title="搜索"><svg width="16" height="16"><path d="M1 1h8v10H1z" fill="#e5eefb"/><path d="M2 3h2M5 3h3M2 7h3" stroke="#444"/><circle cx="10" cy="7" r="4" fill="#cfe7ff" stroke="#2c68b0" stroke-width="1.500"/><path d="M7 10l-4 5" stroke="#2c68b0" stroke-width="2"/></svg></button>
                <button title="菜单"><svg width="16" height="16"><path d="M1 1h10v13H1z" fill="#f4faff" stroke="#9fb9d8"/><path d="M2 3h8M2 6h8M2 9h6" stroke="#3f9fd8" stroke-width="2"/><path d="M9 6v9l2-2 1 3 2-1-1-3h2z" fill="#fff" stroke="#555"/></svg></button>
                <button class="more" title="显示隐藏的图标"><svg width="9" height="5"><path d="M0 5h9L4.500 0z" fill="#f2f6fb"/></svg></button>
                <button class="more" title="音量"><svg width="16" height="16"><path d="M1 5h3l4-4v14l-4-4H1z" fill="#fff" stroke="#333"/><path d="M10 5q2 3 0 6M12 3q4 5 0 10" fill="none" stroke="#fff"/></svg></button>
                <button class="more" title="网络"><svg width="16" height="16"><rect x="5.500" y="4.500" width="10" height="8" fill="#53627a" stroke="#fff"/><path d="M7 14.500h7" stroke="#fff" stroke-width="2"/><path d="M1 1h5v4H1zM3 5v9h3" fill="#555" stroke="#fff"/></svg></button>
            </div>
            <div class="clock"><span>11:04</span><span>2018/7/10</span></div>
            <button class="peek" title="显示桌面"></button>
        </div>
    </div>

</body>
</html>
```

FILE: styles.css
```css
* {
    box-sizing: border-box;
}
body {
    margin: 0;
    font-family: "Noto Sans", "Noto Sans CJK SC", sans-serif;
    font-size: 12px;
    line-height: 16px;
    color: #3b3b3b;
}
button, select, input {
    font: inherit;
    color: inherit;
    background: none;
    border: 0;
    padding: 0;
    margin: 0;
}
svg {
    flex: none;
}
.defs {
    position: absolute;
}
.window {
    display: flex;
    flex-direction: column;
    height: 100vh;
    overflow: hidden;
}
.grow {
    flex: 1;
}
.caret {
    flex: none;
    width: 0;
    border: 3px solid transparent;
    border-top-color: #666;
    border-bottom-width: 0;
}
.caret.pale {
    border-top-color: #b5b8bc;
}

/* title bar */
.titlebar {
    flex: none;
    display: grid;
    grid-template-columns: 1fr auto 1fr;
    align-items: center;
    height: 24px;
    background: linear-gradient(#e9ebee, #e3e6e9);
}
.titlebar h1 {
    margin: 0;
    font-size: 12px;
    font-weight: normal;
    white-space: pre;
}
.quick {
    display: flex;
    align-items: center;
    gap: 7px;
    padding-left: 1px;
}
.quick button, .winbtns button {
    display: flex;
}
.quick .bar {
    width: 1px;
    height: 13px;
    background: #8b8e94;
}
.quick svg + .bar {
    margin: 0 -1px 0 -3px;
}
.winbtns {
    display: flex;
    justify-content: flex-end;
    gap: 23px;
    padding-right: 12px;
}

/* ribbon tabs */
.tabs {
    flex: none;
    display: flex;
    align-items: stretch;
    height: 28px;
    background: #e2e5e8;
    border-bottom: 1px solid #b0b3b9;
}
.tabs button {
    width: 52px;
}
.tabs .wide {
    width: 76px;
}
.tabs .file {
    width: 56px;
    margin-right: 4px;
    color: #fff;
    background: linear-gradient(#3a70c4, #1f55ab 50%, #2a70cd);
    border: 1px solid #1c4587;
    border-radius: 3px 3px 0 0;
}
.tabs .active {
    width: 50px;
    margin-bottom: -1px;
    background: #fff;
    border: 1px solid #b0b3b9;
    border-bottom: 0;
    border-radius: 3px 3px 0 0;
}
.tabs .mini {
    width: 24px;
}
.tabs .help {
    align-self: center;
    width: 16px;
    height: 16px;
    margin-right: 3px;
    border-radius: 50%;
    background: #3c74cb;
    color: #fff;
    font-weight: bold;
}

/* ribbon */
.ribbon {
    flex: none;
    display: flex;
    height: 102px;
    padding-right: 28px;
    background: linear-gradient(#fff 40%, #eceef1);
    border-bottom: 1px solid #8b9097;
}
.group {
    display: flex;
    flex-direction: column;
    border-right: 2px solid #c3c6cb;
}
.group .body {
    flex: 1;
    display: flex;
}
.group footer {
    position: relative;
    height: 18px;
    text-align: center;
    color: #6b7080;
}
.group footer svg {
    position: absolute;
    right: 5px;
    top: 3px;
}
.clipboard {
    width: 113px;
}
.font {
    width: 318px;
}
.para {
    width: 269px;
}
.styles {
    flex: 1;
    min-width: 0;
}
.edit {
    width: 69px;
}
.big {
    display: flex;
    flex-direction: column;
    align-items: center;
    width: 48px;
    padding-top: 5px;
    white-space: nowrap;
}
.big span {
    margin: 6px 0 8px;
}
.stack {
    display: flex;
    flex-direction: column;
    padding-top: 3px;
}
.stack button {
    display: flex;
    align-items: center;
    gap: 4px;
    height: 25px;
    white-space: nowrap;
}
.stack .off {
    color: #999;
}
.edit .stack {
    padding: 2px 0 0 7px;
}
.edit .stack button {
    height: 22px;
}
.rows {
    flex-direction: column;
    gap: 8px;
    padding: 11px 0 0 4px;
}
.row {
    display: flex;
    align-items: center;
    height: 26px;
}
.para .rows {
    padding-left: 5px;
}
.combo {
    display: flex;
    align-items: center;
    height: 26px;
    padding: 0 4px 0 2px;
    background: #fff;
    border: 1px solid #cfd2d7;
    color: #000;
}
.combo select {
    flex: 1;
    appearance: none;
}
.face {
    width: 91px;
}
.size {
    width: 54px;
}
.tool {
    display: flex;
    align-items: center;
    justify-content: center;
    width: 23px;
    height: 24px;
    color: #333;
}
.split {
    width: 35px;
    gap: 3px;
}
.sep {
    width: 1px;
    height: 20px;
    margin: 0 3px;
    background: #d3d6da;
}
.gold {
    background: linear-gradient(#fbd66c, #ffee96);
    border: 1px solid #c2922e;
    border-radius: 3px;
}
.tool.gold {
    height: 22px;
}
.serif {
    font-family: "Liberation Serif", serif;
    font-weight: bold;
    font-size: 14px;
}
.grown {
    font-size: 16px;
}
.shrunk {
    font-size: 12px;
}
.tool .up, .tool .down {
    align-self: flex-start;
    margin-top: 4px;
    border: 3px solid transparent;
}
.tool .up {
    border-bottom-color: #2c58a5;
    border-top-width: 0;
}
.tool .down {
    border-top-color: #2c58a5;
    border-bottom-width: 0;
}
.pinyin {
    flex-direction: column;
}
.pinyin small {
    font-size: 8px;
    line-height: 10px;
}
.pinyin b {
    font-size: 11px;
    line-height: 13px;
    color: #3440b0;
}
.boxed span {
    width: 16px;
    line-height: 14px;
    border: 1px solid #4a6078;
}
.ital {
    font-style: italic;
}
.strike {
    font-size: 12px;
    text-decoration: line-through;
}
.sub {
    font-weight: bold;
    font-size: 13px;
}
.sub sub, .sub sup {
    font-size: 7px;
    color: #2c58a5;
}
.sub sub {
    margin-top: 8px;
}
.sub sup {
    margin-bottom: 8px;
}
.outlined {
    font-size: 17px;
    color: #f2f2f4;
    -webkit-text-stroke: 1px #b5b7bd;
}
.tint span {
    width: 16px;
    line-height: 13px;
    color: #2c58a5;
    font-size: 16px;
    border-bottom: 4px solid #f00;
}
.shade span {
    width: 14px;
    line-height: 14px;
    background: #b3b3b3;
}
.ring span {
    width: 16px;
    font-size: 10px;
    line-height: 14px;
    border: 1px solid #333;
    border-radius: 50%;
}

/* style gallery */
.styles .body {
    justify-content: space-between;
    padding-left: 5px;
}
.gallery {
    display: flex;
    height: 60px;
    margin-top: 5px;
    background: #fff;
    border: 1px solid #c5c8cd;
}
.gallery > button {
    display: flex;
    flex-direction: column;
    align-items: center;
    width: 72px;
    padding: 0 6px;
    white-space: nowrap;
}
.gallery > button.picked {
    padding: 0 3px;
    border: 3px solid #fad764;
    border-radius: 3px;
    outline: 1px solid #c2922e;
    outline-offset: -1px;
}
.gallery b {
    width: 58px;
    height: 37px;
    overflow: hidden;
    text-align: left;
    line-height: 40px;
    color: #000;
    font-family: "Liberation Serif", serif;
    font-weight: normal;
}
.gallery .picked b {
    height: 34px;
    line-height: 34px;
}
.gallery small {
    font-size: 9px;
}
.gallery .s1 {
    font-size: 20px;
    font-weight: bold;
}
.gallery .s2 {
    font-size: 19px;
}
.gallery .s3 {
    font-size: 19px;
    font-family: "Liberation Sans", sans-serif;
}
.gallery .s4 {
    font-size: 13px;
    font-style: italic;
}
.gallery .s5 {
    font-size: 13px;
}
.gallery .s6 {
    font-size: 13px;
    font-weight: bold;
}
.gallery .gray {
    color: #888;
}
.gallery .blue {
    color: #4a80c0;
    font-weight: bold;
}
.updown {
    display: flex;
    flex-direction: column;
    width: 14px;
    border-left: 1px solid #c5c8cd;
}
.updown button {
    flex: 1;
    display: flex;
    flex-direction: column;
    align-items: center;
    justify-content: center;
    gap: 2px;
}
.updown button + button {
    border-top: 1px solid #c5c8cd;
}
.updown .line {
    width: 7px;
    height: 1px;
    background: #666;
}
.tri {
    border: 3px solid transparent;
    border-top-width: 0;
    border-bottom-color: #c0c3c8;
}
.change {
    width: 60px;
}

/* work area */
.work {
    flex: 1;
    display: flex;
    min-height: 0;
    background: linear-gradient(#cdd1d6, #b8bbc0);
}
.navpane {
    display: flex;
    flex-direction: column;
    width: 206px;
    margin-top: 3px;
    padding: 2px;
    background: #e9ecf0;
    border: 1px solid #868b93;
}
.navhead {
    display: flex;
    align-items: center;
    gap: 13px;
    height: 19px;
    padding: 0 5px 0 2px;
    background: #cdd3dc;
}
.navhead span {
    flex: 1;
}
.navhead button {
    display: flex;
}
.search {
    display: flex;
    align-items: center;
    gap: 8px;
    height: 26px;
    margin: 6px 5px 8px;
    padding: 0 3px 0 2px;
    background: #fff;
    border: 1px solid #cfd3d8;
}
.search input {
    flex: 1;
    min-width: 0;
    outline: 0;
}
.search input::placeholder {
    color: #666;
}
.navtabs {
    display: flex;
    align-items: center;
    height: 26px;
    margin: 0 5px;
    padding-right: 6px;
}
.navtabs button {
    display: flex;
    align-items: center;
    justify-content: center;
    width: 26px;
    height: 26px;
    border: 1px solid #babfc7;
    border-left: 0;
    border-bottom: 0;
}
.navtabs .on {
    width: 27px;
    border-left: 1px solid #babfc7;
    background: #fff;
}
.navtabs > svg {
    margin-left: 12px;
}
.navpane > .outline {
    flex: 1;
    display: flex;
    margin: 0 5px;
    background: #fff;
    border: 1px solid #babfc7;
}
.outline ul {
    flex: 1;
    list-style: none;
    margin: 0;
    padding: 10px 3px 0;
}
.outline li a, .totop {
    display: block;
    width: 100%;
    height: 21px;
    padding-left: 18px;
    line-height: 19px;
    white-space: nowrap;
    overflow: hidden;
    color: #333;
    text-decoration: none;
    background: linear-gradient(#fff 50%, #f1f3f6);
    border: 1px solid #cfd2d6;
    border-radius: 4px;
}
.outline .totop {
    padding: 0;
    background: linear-gradient(#ffdf7a, #fdd25c 50%, #fff08c);
    border-color: #bf8f34;
}
.outline .sub2 {
    margin-left: 16px;
}
.outline .open a::before {
    content: "";
    float: left;
    margin: 6px 5px 0 -12px;
    border: 3px solid transparent;
    border-right-color: #333;
    border-bottom-color: #333;
}
.navscroll {
    display: flex;
    flex-direction: column;
    justify-content: space-between;
    align-items: center;
    width: 17px;
    background: #f6f7f8;
}
.navscroll button {
    display: flex;
    align-items: center;
    justify-content: center;
    width: 15px;
    height: 17px;
    background: #eef0f4;
    border: 1px solid #c0c3c9;
}
.canvas {
    flex: 1;
    display: flex;
    justify-content: center;
    min-width: 0;
    padding: 7px 0 0 2px;
    overflow: hidden;
}

/* document page */
.page {
    width: 794px;
    padding: 6px 95px 0;
    background: #fff;
    box-shadow: 2px 4px 7px #7c8086, -2px 4px 7px #7c8086;
    font-size: 16px;
    line-height: 24px;
    color: #000;
}
.page p, .page h2, .page figure {
    margin: 0;
}
.page .lead {
    padding-left: 11px;
}
.page .mark {
    margin-left: 2px;
}
.page figure {
    padding-top: 8px;
    white-space: nowrap;
}
.page .circuit {
    margin-left: 19px;
    vertical-align: bottom;
}
.page .circuit + .mark {
    vertical-align: bottom;
}
.page figcaption {
    padding-left: 11px;
    text-align: center;
    font-size: 14px;
    line-height: 29px;
}
.half {
    font-family: "Liberation Mono", monospace;
    white-space: pre;
}
.page h2 {
    display: flex;
    align-items: center;
    font-size: 20px;
    font-weight: normal;
    line-height: 17px;
}
.page h2::before {
    content: "";
    width: 4px;
    height: 4px;
    margin: 0 4px 0 -8px;
    background: #000;
}
h2 .half {
    font-size: 17px;
}
.page .state {
    line-height: 40px;
}
.wavy {
    text-decoration: underline wavy #2f9a3a 1px;
}
.page .second {
    padding-top: 5px;
}
.page .circuit.large {
    margin-left: 153px;
}
.wire {
    fill: none;
    stroke: #3a6b3a;
    stroke-width: 3;
}
.red {
    fill: none;
    stroke: #b24c45;
    stroke-width: 3;
}
.arrow {
    fill: #c8c8a8;
    stroke: #3a6b3a;
    stroke-width: 3;
}
.part {
    fill: #d8d5bd;
    stroke: #a5403c;
    stroke-width: 3;
}
.chip {
    fill: #c8c8a8;
    stroke: #b24c45;
    stroke-width: 4;
}
.circuit text {
    font-family: "Liberation Sans", sans-serif;
}
.circuit .name {
    font-size: 20px;
    fill: #333;
}
.circuit .seg {
    font-size: 18px;
    fill: #111;
}
.circuit .tiny {
    font-size: 13px;
    font-weight: bold;
    fill: #222;
}
.circuit .ghost {
    font-size: 14px;
    fill: #8a8a80;
}
.circuit .keyname text {
    font-family: "Noto Sans CJK SC", sans-serif;
    font-size: 16px;
    font-weight: bold;
    fill: #8c1010;
}
.large .wire {
    stroke: #003c00;
    stroke-width: 1;
}
.large .red, .large .part, .large .chip {
    stroke: #800000;
    stroke-width: 1;
}
.large .name {
    font-size: 11px;
    fill: #222;
}
.large .tiny {
    font-size: 7px;
}
.large .ghost {
    font-size: 7px;
}
.circuit .volt {
    font-size: 8px;
    font-weight: bold;
    fill: #00ff00;
}

/* document scrollbar */
.scroll {
    display: flex;
    flex-direction: column;
    width: 17px;
    padding-top: 3px;
    background: #dde0e6;
}
.scroll button {
    display: flex;
    align-items: center;
    justify-content: center;
    width: 17px;
    height: 17px;
}
.scroll .ruler {
    height: 23px;
    border-bottom: 1px solid #b5b9c0;
}
.track {
    flex: 1;
    display: flex;
    flex-direction: column;
    padding-top: 335px;
    background: #cfd3d9;
}
.scroll .thumb {
    height: 18px;
    background: #f3f4f6;
    border: 1px solid #9a9fa8;
}

/* status bar */
.status {
    flex: none;
    display: flex;
    align-items: center;
    height: 23px;
    background: linear-gradient(#e4e6e9, #c6c9cd);
    border-top: 1px solid #8d96a5;
    border-bottom: 1px solid #3f4a58;
}
.status > button {
    height: 19px;
    padding: 0 10px 0 9px;
    border-right: 1px solid #8f9399;
}
.status > button:first-child {
    padding-left: 8px;
}
.status > .plain, .status > .round {
    border: 0;
}
.status > .round {
    display: flex;
    align-items: center;
    padding: 0;
}
.views {
    display: flex;
    align-items: center;
    height: 20px;
    padding-left: 4px;
    border-left: 1px solid #8f9399;
}
.views button {
    display: flex;
    align-items: center;
    justify-content: center;
    width: 18px;
    height: 18px;
}
.status > .zoom {
    padding: 0 9px 0 11px;
}
.slider {
    appearance: none;
    width: 100px;
    height: 16px;
}
.slider::-webkit-slider-runnable-track {
    height: 1px;
    background: #8d96a5;
}
.slider::-webkit-slider-thumb {
    appearance: none;
    width: 9px;
    height: 12px;
    margin-top: -6px;
    background: #fafafa;
    border: 1px solid #6d727c;
    border-radius: 1px 1px 4px 4px;
}
.status > .round:last-child {
    margin-right: 4px;
}

/* taskbar */
.taskbar {
    flex: none;
    display: flex;
    align-items: center;
    height: 39px;
    background: linear-gradient(90deg, #8294ad, #8ea3c0 4%, #a6bfdd 7%, #a6bfdd 76%, #8294ac 79%, #8294ac);
}
.taskbar button {
    display: flex;
    align-items: center;
    justify-content: center;
}
.start {
    margin-left: 8px;
}
.task {
    width: 59px;
    height: 38px;
    margin-right: 3px;
    background: linear-gradient(135deg, #dce7f4, #a9c0de);
    border: 1px solid #51678a;
    border-radius: 3px;
    box-shadow: inset 0 0 0 1px #e4eefa;
}
.task.bare {
    width: 69px;
    margin-left: 6px;
    margin-right: 0;
    background: none;
    border: 0;
    box-shadow: none;
}
.task.current {
    background: linear-gradient(135deg, #f5f8fc, #d5e2f1);
}
.tray {
    display: flex;
}
.tray button {
    width: 20px;
    height: 24px;
}
.tray .zh {
    font-size: 14px;
    color: #1f4775;
}
.tray .more {
    width: 24px;
}
.tray .more:nth-child(9) {
    margin-left: 3px;
}
.clock {
    display: flex;
    flex-direction: column;
    align-items: center;
    gap: 2px;
    width: 80px;
    color: #fff;
}
.peek {
    width: 14px;
    height: 39px;
    background: linear-gradient(#8b98aa, #4d5b70 50%, #7f8da1);
    border: 1px solid #3c4858;
}
```
